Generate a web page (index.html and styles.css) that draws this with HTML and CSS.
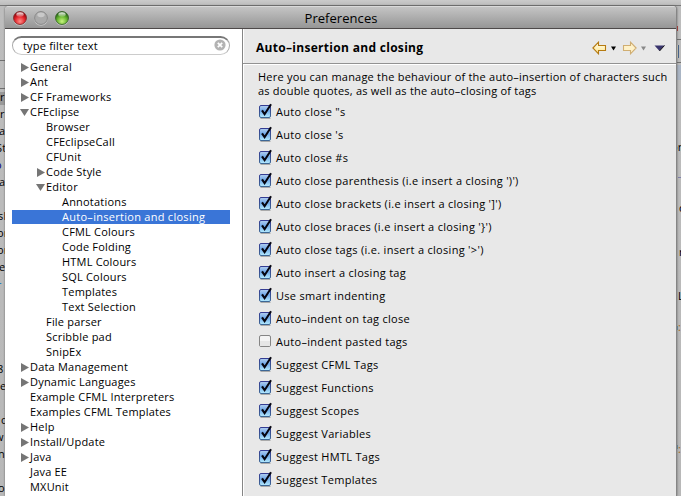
FILE: index.html
```html
<!DOCTYPE html>
<html lang="en">
<head>
<meta charset="utf-8">
<title>Preferences</title>
<link rel="stylesheet" href="styles.css">
</head>
<body>
<svg width="0" height="0" class="defs">
  <defs>
    <linearGradient id="blue" x1="0" y1="0" x2="0" y2="1"><stop offset="0" stop-color="#b4cff0"/><stop offset=".45" stop-color="#6fa8e8"/><stop offset="1" stop-color="#b5ecff"/></linearGradient>
    <linearGradient id="edge" x1="0" y1="0" x2="0" y2="1"><stop offset="0" stop-color="#343c92"/><stop offset="1" stop-color="#3d6795"/></linearGradient>
    <linearGradient id="gold" x1="0" y1="0" x2="0" y2="1"><stop offset="0" stop-color="#fffef0"/><stop offset="1" stop-color="#ffe58a"/></linearGradient>
    <symbol id="on" viewBox="0 0 14 16"><path d="M1.5 15.5h10" stroke="#aaa"/><rect x=".5" y="2.5" width="11" height="12" rx="1.5" fill="url(#blue)" stroke="url(#edge)"/><path d="M3 7.3 5.6 11.2 12 1.2" fill="none" stroke="#050510" stroke-width="2.1"/></symbol>
    <symbol id="off" viewBox="0 0 14 16"><rect x=".5" y="2.5" width="11" height="11" rx="1.5" fill="#f4f4f4" stroke="#858585"/><path d="M1 8h10v5H1z" fill="#e6e6e6"/></symbol>
  </defs>
</svg>
<div class="screen">
  <div class="behind">
    <i class="line l1"></i><i class="line l2"></i><i class="line l3"></i><i class="line l4"></i>
    <i class="patch p1"></i><i class="patch p2"></i><i class="patch p3"></i><i class="patch p4"></i>
    <svg class="left-text" width="6" height="496">
      <text x="0" y="101">r</text><text x="0" y="118">r</text><text x="-1" y="135">ac</text><text x="-4" y="152">St</text><text x="-5" y="169" class="navy">o</text><text x="-1" y="186">a</text><text x="-2" y="220">sh</text><text x="-3" y="237">or</text><text x="-3" y="254">or</text><text x="-1" y="271">er</text><text x="-2" y="286" class="sky">-</text><text x="-3" y="373">8</text><text x="0" y="390">e</text><text x="1" y="424">c</text><text x="-5" y="441">w</text><text x="-2" y="458">ne</text><text x="-2" y="492">o</text>
    </svg>
    <svg class="right-text" width="5" height="496">
      <text x="-6" y="151">or</text><path d="M1 177.5h4" stroke="#8080aa"/><text x="2" y="212">d</text><text x="2" y="256">r</text><text x="1" y="300">L</text><text x="1" y="331" class="gold">:</text><text x="1" y="453" class="gold">:</text><path d="M0 326v4M0 445v4" stroke="#216d99"/>
    </svg>
  </div>
  <main class="window">
    <header class="titlebar">
      <svg class="lights" width="60" height="18" viewBox="0 0 60 18">
        <defs>
          <radialGradient id="red" cx=".5" cy=".75" r=".7"><stop offset="0" stop-color="#ff8f88"/><stop offset=".55" stop-color="#e3242b"/><stop offset="1" stop-color="#850008"/></radialGradient>
          <radialGradient id="green" cx=".5" cy=".75" r=".7"><stop offset="0" stop-color="#c9f480"/><stop offset=".55" stop-color="#66b52f"/><stop offset="1" stop-color="#1d5a12"/></radialGradient>
          <linearGradient id="shine" x1="0" y1="0" x2="0" y2="1"><stop offset="0" stop-color="#fff" stop-opacity=".95"/><stop offset="1" stop-color="#fff" stop-opacity=".1"/></linearGradient>
        </defs>
        <circle cx="8" cy="9.7" r="7" fill="#c5c5c5"/><circle cx="29" cy="9.7" r="7" fill="#c5c5c5"/><circle cx="50" cy="9.7" r="7" fill="#c5c5c5"/>
        <circle cx="8" cy="9" r="6.5" fill="url(#red)" stroke="#7a2325" stroke-width=".8"/><ellipse cx="8" cy="5.6" rx="3.7" ry="2.4" fill="url(#shine)"/>
        <circle cx="29" cy="9" r="6.4" fill="#aaa" stroke="#828282" stroke-width=".9"/><ellipse cx="29" cy="5.8" rx="3.7" ry="2.4" fill="#c9c9c9"/>
        <circle cx="50" cy="9" r="6.5" fill="url(#green)" stroke="#2f591f" stroke-width=".8"/><ellipse cx="50" cy="5.6" rx="3.7" ry="2.4" fill="url(#shine)"/>
      </svg>
      <h1>Preferences</h1>
    </header>
    <div class="body">
      <aside class="sidebar">
        <div class="search"><span>type filter text</span>
          <svg width="12" height="12" viewBox="0 0 12 12"><circle cx="6" cy="6" r="5.6" fill="#b3b3b3"/><path d="m3.8 3.8 4.4 4.4m0-4.4L3.8 8.2" stroke="#fff" stroke-width="1.7"/></svg>
        </div>
        <ul class="tree">
          <li class="closed">General</li><li class="closed">Ant</li><li class="closed">CF Frameworks</li><li class="open">CFEclipse</li>
          <li class="d1">Browser</li><li class="d1">CFEclipseCall</li><li class="d1">CFUnit</li><li class="d1 closed">Code Style</li><li class="d1 open">Editor</li>
          <li class="d2">Annotations</li><li class="d2 selected">Auto–insertion and closing</li><li class="d2">CFML Colours</li><li class="d2">Code Folding</li><li class="d2">HTML Colours</li><li class="d2">SQL Colours</li><li class="d2">Templates</li><li class="d2">Text Selection</li>
          <li class="d1">File parser</li><li class="d1">Scribble pad</li><li class="d1">SnipEx</li>
          <li class="closed">Data Management</li><li class="closed">Dynamic Languages</li><li>Example CFML Interpreters</li><li>Examples CFML Templates</li><li class="closed">Help</li><li class="closed">Install/Update</li><li class="closed">Java</li><li>Java EE</li><li>MXUnit</li>
        </ul>
      </aside>
      <section class="page">
        <div class="heading"><h2>Auto–insertion and closing</h2>
          <svg width="74" height="14" viewBox="0 0 74 14">
            <path d="M.9 7 6.5 1.2V4.5h7v5h-7v3.3z" fill="url(#gold)" stroke="#b57a10" stroke-width="1.1"/>
            <path d="M19 5.5h5L21.5 9.5z" fill="#000"/>
            <path d="M44.1 7 38.5 1.2V4.5h-7v5h7v3.3z" fill="#fff2c9" stroke="#d0ae72" stroke-width="1.1"/>
            <path d="M49 5.5h5L51.5 9.5z" fill="#888"/>
            <path d="M62.500 4.5h10L67.500 10z" fill="#39346d"/><path d="m67.500 10 5-5.5" stroke="#111"/>
          </svg>
        </div>
        <p class="intro">Here you can manage the behaviour of the auto–insertion of characters such<br>as double quotes, as well as the auto–closing of tags</p>
        <ul class="options">
          <li><svg><use href="#on"/></svg>Auto close "s</li>
          <li><svg><use href="#on"/></svg>Auto close 's</li>
          <li><svg><use href="#on"/></svg>Auto close #s</li>
          <li><svg><use href="#on"/></svg>Auto close parenthesis (i.e insert a closing ')')</li>
          <li><svg><use href="#on"/></svg>Auto close brackets (i.e insert a closing ']')</li>
          <li><svg><use href="#on"/></svg>Auto close braces (i.e insert a closing '}')</li>
          <li><svg><use href="#on"/></svg>Auto close tags (i.e. insert a closing '&gt;')</li>
          <li><svg><use href="#on"/></svg>Auto insert a closing tag</li>
          <li><svg><use href="#on"/></svg>Use smart indenting</li>
          <li><svg><use href="#on"/></svg>Auto–indent on tag close</li>
          <li><svg><use href="#off"/></svg>Auto–indent pasted tags</li>
          <li><svg><use href="#on"/></svg>Suggest CFML Tags</li>
          <li><svg><use href="#on"/></svg>Suggest Functions</li>
          <li><svg><use href="#on"/></svg>Suggest Scopes</li>
          <li><svg><use href="#on"/></svg>Suggest Variables</li>
          <li><svg><use href="#on"/></svg>Suggest HMTL Tags</li>
          <li><svg><use href="#on"/></svg>Suggest Templates</li>
        </ul>
      </section>
    </div>
  </main>
</div>
</body>
</html>
```
FILE: styles.css
```css
* { box-sizing: border-box; }
body { margin: 0; font: 11px/15px "Lucida Grande", "Open Sans", "Noto Sans", sans-serif; letter-spacing: .2px; color: #000; overflow: hidden; }
ul, h1, h2, p { margin: 0; padding: 0; list-style: none; }
.defs { position: absolute; }
.screen { position: relative; width: 681px; height: 496px; padding: 6px 4px 0 5px; overflow: hidden; background: #b9b9b9; }
.behind { position: absolute; inset: 0; background: linear-gradient(#cbcbcb, #bdbdbd 5px, #777 5px, #777 6px, #bdbdbd 6px, #b8b8b8); }
.behind svg { position: absolute; top: 0; left: 0; font-size: 11px; }
.behind .right-text { left: 677px; }
.navy { fill: #00007a; }
.sky { fill: #0073c4; }
.gold { fill: #a66a12; }
.line, .patch { position: absolute; }
.line { height: 1px; background: #707070; left: 0; width: 5px; }
.l1 { top: 60px; }
.l2 { top: 88px; }
.l3 { top: 39px; left: 677px; }
.l4 { top: 62px; left: 677px; }
.p1 { left: 0; top: 92px; width: 5px; height: 13px; background: #999; }
.p2 { left: 677px; top: 65px; width: 4px; height: 15px; background: #aab5c4; }
.p3 { left: 677px; top: 26px; width: 1px; height: 5px; background: #b53a36; }
.p4 { left: 677px; top: 45px; width: 2px; height: 13px; background: #dcd7c5; border: solid #46648c; border-width: 0 1px 0 0; }
.window { position: relative; height: 490px; display: flex; flex-direction: column; border-right: 1px solid #858585; border-radius: 4px 4px 0 0; overflow: hidden; background: #e8e8e8; box-shadow: 0 0 2px #555; }
.titlebar { height: 23px; flex: none; display: flex; align-items: center; border-top: 1px solid #dadada; border-bottom: 1px solid #4d4949; background: linear-gradient(#c4c4c4, #969696); }
.lights { margin-left: 7px; }
h1 { flex: 1; font-size: 13px; font-weight: 400; line-height: 18px; text-align: center; letter-spacing: .05px; margin-right: 66px; }
.body { display: flex; flex: 1; min-height: 0; }
.sidebar { width: 237px; background: #fff; padding: 7px 12px 0 7px; }
.search { height: 19px; display: flex; align-items: center; justify-content: space-between; padding: 0 3px 2px 10px; border: 1px solid #aaa; border-top: 2px solid #777; border-bottom-color: #ccc; border-radius: 10px; }
.tree { margin-top: 5px; }
.tree li { position: relative; height: 15px; line-height: 13px; padding-left: 18px; white-space: nowrap; }
.tree .d1 { padding-left: 34px; }
.tree .d2 { padding-left: 50px; }
.tree .selected { background: linear-gradient(#3a75d7, #3a75d7) no-repeat 0 0 / 100% 14px; color: #fff; letter-spacing: .28px; }
.closed::before, .open::before { content: ""; position: absolute; left: 9px; top: 3px; width: 8px; height: 9px; background: #757575; clip-path: polygon(0 0, 100% 50%, 0 100%); }
.open::before { left: 8px; top: 4px; width: 9px; height: 7px; clip-path: polygon(0 0, 100% 0, 50% 100%); }
.d1::before { margin-left: 16px; }
.page { flex: 1; border-left: 1px solid #858585; box-shadow: inset 1px 0 #fff; }
.heading { height: 35px; display: flex; align-items: center; justify-content: space-between; padding: 3px 10px 0 13px; border-bottom: 1px solid #929292; box-shadow: 0 1px #fff; }
h2 { font-size: 12px; line-height: 16px; letter-spacing: .3px; }
.intro { padding: 6px 0 0 15px; line-height: 14px; letter-spacing: .22px; white-space: nowrap; }
.options { padding: 2px 0 0 16px; letter-spacing: .3px; }
.options li { height: 23px; display: flex; align-items: center; gap: 3px; white-space: nowrap; }
.options svg { width: 14px; height: 16px; margin-top: -1px; }
```
